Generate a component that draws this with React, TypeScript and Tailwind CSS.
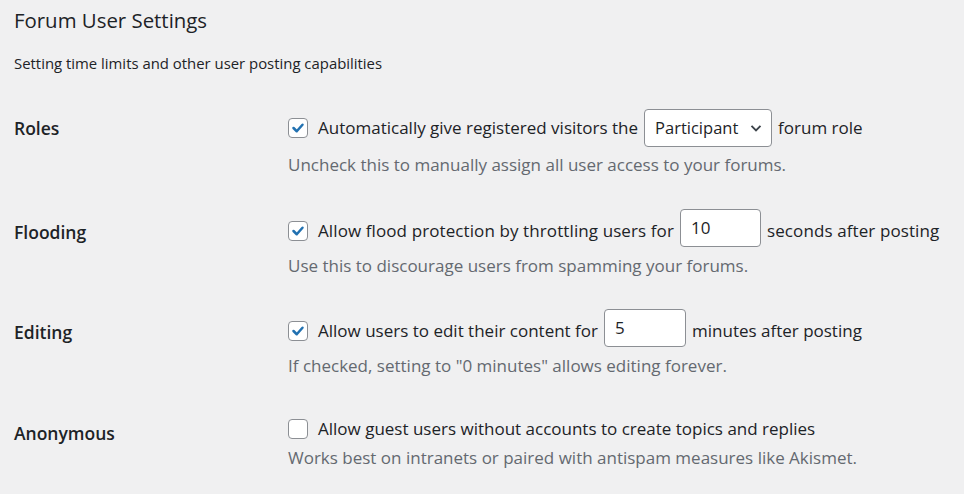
import React from "react";

function Check({ checked }: { checked: boolean }) {
  return (
    <span className="inline-flex h-[20px] w-[20px] shrink-0 items-center justify-center rounded-[4px] border border-[#8c8f94] bg-white">
      {checked && (
        <svg viewBox="0 0 20 20" className="h-[20px] w-[20px]">
          <path d="M5 10 L8.6 13.6 L15 6.4" fill="none" stroke="#2271b1" strokeWidth="2.8" strokeLinecap="round" strokeLinejoin="round" />
        </svg>
      )}
    </span>
  );
}

export default function App() {
  const font = { fontFamily: '"Open Sans", "Noto Sans", sans-serif' };
  return (
    <div className="h-[494px] w-[964px] overflow-hidden bg-[#f0f0f1] pl-[14px] text-[#1d2327]" style={font}>
      <h2 className="mt-[6px] h-[28px] text-[20.4px] leading-[28px] font-normal">Forum User Settings</h2>
      <p className="mt-[17px] h-[24px] text-[14.9px] leading-[24px]">Setting time limits and other user posting capabilities</p>

      {/* Roles */}
      <div className="mt-[34px] flex">
        <div className="mt-[7px] w-[274px] text-[17.5px] leading-[24px] font-semibold">Roles</div>
        <div>
          <div className="flex h-[38px] items-center gap-[10px] text-[17px]">
            <Check checked />
            <span className="flex items-center gap-[6px]">
              Automatically give registered visitors the
              <span className="flex h-[38px] w-[128px] items-center justify-between rounded-[4px] border border-[#8c8f94] bg-white pl-[10px] pr-[9px] text-[16.5px]">
                Participant
                <svg viewBox="0 0 12 12" className="h-[12px] w-[12px]"><path d="M1.5 3.8 L6 8.3 L10.5 3.8" fill="none" stroke="#3c434a" strokeWidth="1.9" /></svg>
              </span>
              forum role
            </span>
          </div>
          <p className="mt-[5px] h-[26px] text-[17px] leading-[26px] text-[#646970]">Uncheck this to manually assign all user access to your forums.</p>
        </div>
      </div>

      {/* Flooding */}
      <div className="mt-[34px] flex">
        <div className="mt-[8px] w-[274px] text-[17.5px] leading-[24px] font-semibold">Flooding</div>
        <div>
          <div className="flex h-[38px] items-center gap-[10px] text-[17px]">
            <Check checked />
            <span className="flex items-center gap-[6px] tracking-[0.1px]">
              Allow flood protection by throttling users for
              <span className="mb-[6px] flex h-[38px] w-[81px] items-center rounded-[4px] border border-[#8c8f94] bg-white pl-[10px]">10</span>
              seconds after posting
            </span>
          </div>
          <p className="mt-[3px] h-[26px] text-[17px] leading-[26px] text-[#646970]">Use this to discourage users from spamming your forums.</p>
        </div>
      </div>

      {/* Editing */}
      <div className="mt-[33px] flex">
        <div className="mt-[8px] w-[274px] text-[17.5px] leading-[24px] font-semibold">Editing</div>
        <div>
          <div className="flex h-[38px] items-center gap-[10px] text-[17px]">
            <Check checked />
            <span className="flex items-center gap-[6px]">
              Allow users to edit their content for
              <span className="mb-[6px] flex h-[38px] w-[82px] items-center rounded-[4px] border border-[#8c8f94] bg-white pl-[10px]">5</span>
              minutes after posting
            </span>
          </div>
          <p className="mt-[3px] h-[26px] text-[17px] leading-[26px] text-[#646970]">If checked, setting to "0 minutes" allows editing forever.</p>
        </div>
      </div>

      {/* Anonymous */}
      <div className="mt-[39px] flex">
        <div className="mt-[3px] w-[274px] text-[17.5px] leading-[24px] font-semibold">Anonymous</div>
        <div>
          <div className="flex h-[22px] items-center gap-[10px] text-[17px]">
            <Check checked={false} />
            <span>Allow guest users without accounts to create topics and replies</span>
          </div>
          <p className="mt-[5px] h-[26px] text-[17px] leading-[26px] text-[#646970]">Works best on intranets or paired with antispam measures like Akismet.</p>
        </div>
      </div>
    </div>
  );
}
